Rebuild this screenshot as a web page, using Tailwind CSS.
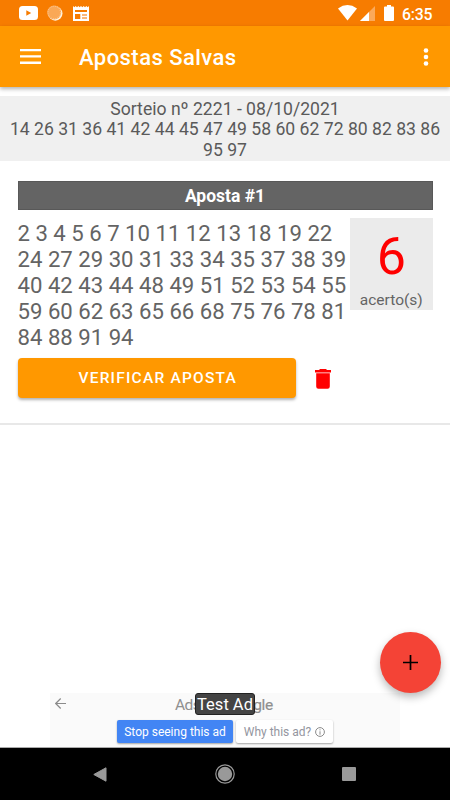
<!DOCTYPE html>
<html lang="pt-BR">
  <head>
    <meta charset="UTF-8" />
    <meta name="viewport" content="width=device-width, initial-scale=1.0" />
    <title>Apostas Salvas</title>
    <script src="https://cdn.jsdelivr.net/npm/@tailwindcss/browser@4"></script>
  </head>
  <body class="bg-white font-['Roboto',sans-serif]">
    <div class="relative flex flex-col w-[450px] h-[800px] overflow-hidden">
      <!-- Status bar -->
      <div class="flex items-center h-[26px] shrink-0 bg-[#f77c00] pl-[19px] pr-[17px] text-white">
        <svg class="w-[19px] h-[14px]" viewBox="0 0 19 14">
          <rect width="19" height="14" rx="3.5" fill="#fff" />
          <path d="M7.3 4.3v5.4L12.2 7z" fill="#f77c00" />
        </svg>
        <svg class="w-4 h-4 ml-[9px]" viewBox="0 0 16 16">
          <circle cx="8.300" cy="8.500" r="7.2" fill="#fff4df" />
          <circle cx="7.2" cy="7.5" r="7" fill="#faa856" />
          <circle cx="7.2" cy="7.5" r="6.3" fill="none" stroke="#fff" stroke-opacity=".4" stroke-dasharray="1 1" />
        </svg>
        <svg class="w-4 h-[15px] ml-[10px]" viewBox="0 0 16 15">
          <path d="M0 0l1.33 1.3L2.66 0 4 1.3 5.33 0l1.33 1.3L8 0l1.33 1.3L10.66 0 12 1.3 13.33 0l1.33 1.3L16 0v15H0z" fill="#fff" />
          <path d="M2 4h12v2H2zM2 8h5.3v5H2z" fill="#f77c00" />
          <path d="M9 8h5v2H9zM9 11h5v2H9z" fill="#fbb87a" />
        </svg>
        <svg class="w-[19px] h-4 ml-auto" viewBox="0 0 19 16">
          <path d="M0 3.4Q9.5-3.4 19 3.4L9.5 15.5z" fill="#fff" />
        </svg>
        <svg class="w-[15px] h-[15px] ml-[3px] mt-px" viewBox="0 0 15 15">
          <path d="M15 0v15H0z" fill="#fba95a" />
          <path d="M9 6v9H0z" fill="#fff" />
        </svg>
        <svg class="w-[10px] h-4 ml-[9px]" viewBox="0 0 10 16">
          <path d="M3 0h4v1.5h2q1 0 1 1V15q0 1-1 1H1q-1 0-1-1V2.500q0-1 1-1h2z" fill="#fff" />
        </svg>
        <span class="ml-2 mt-[3px] w-[31px] text-[15.800px] leading-none font-medium tracking-[-0.200px] whitespace-nowrap">6:35</span>
      </div>

      <!-- App bar -->
      <header class="relative flex items-center h-[61px] shrink-0 bg-[#ff9800] pl-5 pr-[21px] text-white shadow-[0_2px_4px_rgba(0,0,0,0.3)]">
        <svg class="w-[21px] h-[15px]" viewBox="0 0 21 15" fill="#fff">
          <path d="M0 0h21v2.300H0zM0 6.300h21v2.300H0zM0 12.600h21v2.300H0z" />
        </svg>
        <h1 class="ml-[38px] mt-[3px] text-[22px] leading-none font-medium tracking-[0.450px]">Apostas Salvas</h1>
        <svg class="w-[6px] h-[18px] ml-auto" viewBox="0 0 6 18" fill="#fff">
          <circle cx="3" cy="2.500" r="2.300" />
          <circle cx="3" cy="9" r="2.300" />
          <circle cx="3" cy="15.500" r="2.300" />
        </svg>
      </header>

      <!-- Draw result -->
      <section class="mt-[9px] h-[65px] shrink-0 bg-[#f0f0f0] px-2 pt-[3px] text-center text-[17.600px] leading-[20.400px] text-[#5a5a5a]">
        <p>Sorteio nº 2221 - 08/10/2021</p>
        <p class="whitespace-nowrap">14 26 31 36 41 42 44 45 47 49 58 60 62 72 80 82 83 86</p>
        <p>95 97</p>
      </section>

      <!-- Saved bet -->
      <section class="mt-5 h-[244px] shrink-0 border-b-2 border-[#e8e8e8] pl-[17.500px] pr-[17.500px]">
        <h2 class="h-[29px] bg-[#646464] border border-[#585858] text-center text-[17.500px] leading-[29px] font-bold text-white">Aposta #1</h2>
        <div class="flex justify-between h-[148px]">
          <p class="pt-[10px] text-[22.150px] leading-[26px] text-[#646464] whitespace-nowrap">
            2 3 4 5 6 7 10 11 12 13 18 19 22<br />
            24 27 29 30 31 33 34 35 37 38 39<br />
            40 42 43 44 48 49 51 52 53 54 55<br />
            59 60 62 63 65 66 68 75 76 78 81<br />
            84 88 91 94
          </p>
          <div class="mt-2 w-[82.500px] h-[92px] bg-[#ebebeb] text-center">
            <div class="pt-[8px] text-[52px] leading-[61px] text-[#ff0000]">6</div>
            <div class="mt-1 text-[15.500px] leading-[18px] text-[#646464]">acerto(s)</div>
          </div>
        </div>
        <div class="flex items-center h-[39px]">
          <button class="w-[278.500px] h-[40px] rounded-[4px] bg-[#ff9800] pt-[2px] pl-[2px] text-[15.500px] font-medium tracking-[1.220px] text-white shadow-[0_2px_3px_rgba(0,0,0,0.3)]">VERIFICAR APOSTA</button>
          <svg class="w-4 h-5 ml-[19px] mt-[2px]" viewBox="0 0 16 20" fill="#ff0000">
            <path d="M5 0h6l1 1h4v2.400H0V1h4zM1.200 4.300h13.600v13.200q0 2.200-2.200 2.200H3.400q-2.200 0-2.200-2.200z" />
          </svg>
        </div>
      </section>

      <!-- Ad banner -->
      <div class="relative mt-auto mx-auto w-[350px] h-[54px] shrink-0 bg-[#fafafa]">
        <svg class="absolute left-[5px] top-[5px] w-[11px] h-[11px]" viewBox="0 0 11 11" fill="none" stroke="#8b8b8b" stroke-width="1.200">
          <path d="M11 5.500H.9M5.700.5l-5 5 5 5" />
        </svg>
        <div class="flex justify-between w-[98px] ml-[125px] pt-[3px] text-[15.500px] leading-[19px] text-[#8f8f8f]">
          <span class="tracking-[-0.500px]">Ads</span>
          <span class="tracking-[-0.300px] [-webkit-text-stroke:0.200px_#8f8f8f]">gle</span>
        </div>
        <div class="absolute left-[145px] top-0 w-[60px] h-[22px] rounded-[3px] border border-[#222] bg-[#444] text-center text-[16.500px] leading-[22px] text-white whitespace-nowrap">Test Ad</div>
        <div class="flex gap-[3px] pl-[67px] pt-[5px] text-[12px]">
          <div class="flex items-center justify-center w-[116px] h-[23px] rounded-[2px] bg-[#4285f4] text-white whitespace-nowrap shadow-[0_1px_2px_rgba(0,0,0,0.35)]">Stop seeing this ad</div>
          <div class="flex items-center justify-center gap-1 w-[97px] h-[23px] rounded-[2px] bg-white text-[#9496a0] whitespace-nowrap shadow-[0_1px_2px_rgba(0,0,0,0.35)]">
            Why this ad?
            <svg class="w-[10px] h-[10px] mt-px" viewBox="0 0 10 10" fill="none" stroke="#8b8b8b">
              <circle cx="5" cy="5" r="4.400" />
              <path d="M5 4.300v3.400M5 2.300v1.100" />
            </svg>
          </div>
        </div>
      </div>

      <!-- Navigation bar -->
      <nav class="grid grid-cols-[200px_50px_198px] items-center h-[53px] shrink-0 border-t border-[#aaa] bg-black">
        <svg class="w-[14px] h-[15px] mx-auto" viewBox="0 0 14 15">
          <path d="M13 .8v13.400L.8 7.500z" fill="#999" stroke="#999" stroke-linejoin="round" />
        </svg>
        <svg class="w-[20px] h-[20px] mx-auto" viewBox="0 0 20 20">
          <circle cx="10" cy="10" r="9.200" fill="none" stroke="#999" stroke-width="1.200" />
          <circle cx="10" cy="10" r="7.200" fill="#999" />
        </svg>
        <div class="w-[14px] h-[14px] mx-auto rounded-[1px] bg-[#999]"></div>
      </nav>

      <!-- Floating add button -->
      <button class="absolute left-[380px] top-[632px] flex items-center justify-center w-[61px] h-[61px] rounded-full bg-[#f44336] shadow-[0_4px_8px_rgba(0,0,0,0.28)]">
        <svg class="w-[15px] h-[15px]" viewBox="0 0 15 15" fill="none" stroke="#000" stroke-width="1.700">
          <path d="M7.500 0v15M0 7.500h15" />
        </svg>
      </button>
    </div>
  </body>
</html>
